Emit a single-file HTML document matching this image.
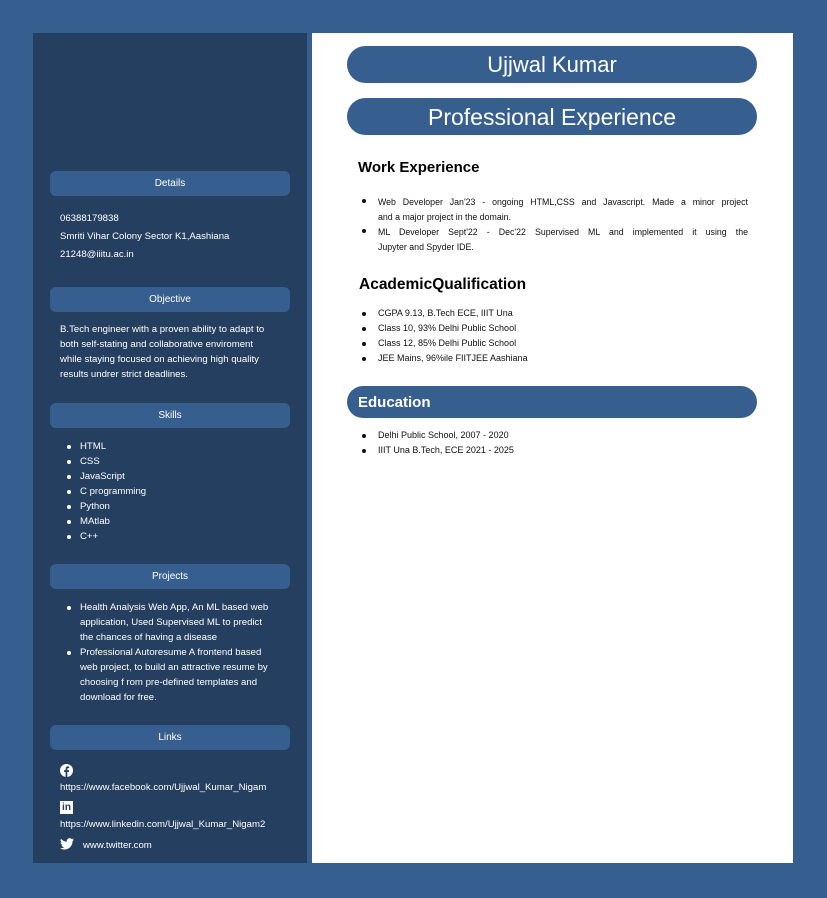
<!DOCTYPE html>
<html><head><meta charset="utf-8"><style>
*{margin:0;padding:0;box-sizing:border-box}
body{width:827px;height:898px;background:#365f8f;position:relative;font-family:"Liberation Sans",sans-serif;overflow:hidden}
.side{position:absolute;left:33px;top:33px;width:274px;height:830px;background:#253f60}
.main{position:absolute;left:312px;top:33px;width:481px;height:830px;background:#fff}
.hd{position:absolute;left:50px;width:240px;height:25px;background:#365f8f;border-radius:6px;color:#fff;font-size:10px;text-align:center;line-height:25px}
.t{position:absolute;color:#fff;font-size:9.6px;white-space:nowrap}
.b{position:absolute;font-size:9px;white-space:nowrap;color:#111}
.dot::before{content:"";position:absolute;left:-16px;top:4px;width:4px;height:4px;border-radius:50%;background:currentColor}
.t.dot::before{left:-13px}
.pill{position:absolute;left:347px;width:410px;background:#365f8f;border-radius:19px;color:#fff;text-align:center}
h3{position:absolute;font-size:15px;color:#000}
.j{display:block;text-align:justify;text-align-last:justify}
</style></head><body>
<div class="side"></div><div class="main"></div>

<div class="hd" style="top:171px">Details</div>
<div class="t" style="left:60px;top:213px">06388179838</div>
<div class="t" style="left:60px;top:231px">Smriti Vihar Colony Sector K1,Aashiana</div>
<div class="t" style="left:60px;top:249px">21248@iiitu.ac.in</div>

<div class="hd" style="top:287px">Objective</div>
<div class="t" style="left:60px;top:324px">B.Tech engineer with a proven ability to adapt to</div>
<div class="t" style="left:60px;top:339px">both self-stating and collaborative enviroment</div>
<div class="t" style="left:60px;top:354px">while staying focused on achieving high quality</div>
<div class="t" style="left:60px;top:369px">results undrer strict deadlines.</div>

<div class="hd" style="top:403px">Skills</div>
<div class="t dot" style="left:80px;top:441px">HTML</div>
<div class="t dot" style="left:80px;top:456px">CSS</div>
<div class="t dot" style="left:80px;top:471px">JavaScript</div>
<div class="t dot" style="left:80px;top:486px">C programming</div>
<div class="t dot" style="left:80px;top:501px">Python</div>
<div class="t dot" style="left:80px;top:516px">MAtlab</div>
<div class="t dot" style="left:80px;top:531px">C++</div>

<div class="hd" style="top:564px">Projects</div>
<div class="t dot" style="left:80px;top:602px">Health Analysis Web App, An ML based web</div>
<div class="t" style="left:80px;top:617px">application, Used Supervised ML to predict</div>
<div class="t" style="left:80px;top:632px">the chances of having a disease</div>
<div class="t dot" style="left:80px;top:647px">Professional Autoresume A frontend based</div>
<div class="t" style="left:80px;top:662px">web project, to build an attractive resume by</div>
<div class="t" style="left:80px;top:677px">choosing f rom pre-defined templates and</div>
<div class="t" style="left:80px;top:692px">download for free.</div>

<div class="hd" style="top:725px">Links</div>
<svg style="position:absolute;left:60px;top:764px" width="13" height="13" viewBox="0 0 13 13"><circle cx="6.5" cy="6.5" r="6.5" fill="#fff"/><path d="M7.3 13V8h1.6l.3-1.9H7.3V5c0-.5.2-.9.9-.9h1V2.5C8.9 2.4 8.4 2.4 7.9 2.4c-1.4 0-2.3.8-2.3 2.4v1.3H4.1V8h1.5v5z" fill="#253f60"/></svg>
<div class="t" style="left:60px;top:782px">https://www.facebook.com/Ujjwal_Kumar_Nigam</div>
<div style="position:absolute;left:60px;top:801px;width:13px;height:13px;background:#fff;color:#253f60;font-size:10px;font-weight:bold;line-height:13px;text-align:center">in</div>
<div class="t" style="left:60px;top:819px">https://www.linkedin.com/Ujjwal_Kumar_Nigam2</div>
<svg style="position:absolute;left:60px;top:838px" width="14" height="12" viewBox="0 0 24 20"><path d="M24 2.4a10 10 0 0 1-2.8.8A5 5 0 0 0 23.3.4a10 10 0 0 1-3.1 1.2A4.9 4.9 0 0 0 11.8 6 14 14 0 0 1 1.7.9a4.9 4.9 0 0 0 1.5 6.6A4.9 4.9 0 0 1 1 6.9a4.9 4.9 0 0 0 3.9 4.9 5 5 0 0 1-2.2.1 4.9 4.9 0 0 0 4.6 3.4A9.9 9.9 0 0 1 0 17.3 14 14 0 0 0 7.5 19.5c9.1 0 14-7.5 14-14v-.6A10 10 0 0 0 24 2.4z" fill="#fff"/></svg>
<div class="t" style="left:83px;top:840px">www.twitter.com</div>

<div class="pill" style="top:46px;height:37px;font-size:22px;line-height:38px">Ujjwal Kumar</div>
<div class="pill" style="top:98px;height:37px;font-size:23px;line-height:39px">Professional Experience</div>

<h3 style="left:358px;top:159px">Work Experience</h3>
<div class="b dot" style="left:378px;top:195px;width:370px;white-space:normal;line-height:15px;font-size:8.8px"><span class="j">Web Developer Jan'23 - ongoing HTML,CSS and Javascript. Made a minor project</span>and a major project in the domain.</div>
<div class="b dot" style="left:378px;top:225px;width:370px;white-space:normal;line-height:15px;font-size:8.8px"><span class="j">ML Developer Sept'22 - Dec'22 Supervised ML and implemented it using the</span>Jupyter and Spyder IDE.</div>

<h3 style="left:359px;top:276px;font-size:15.5px">AcademicQualification</h3>
<div class="b dot" style="left:378px;top:308px">CGPA 9.13, B.Tech ECE, IIIT Una</div>
<div class="b dot" style="left:378px;top:323px">Class 10, 93% Delhi Public School</div>
<div class="b dot" style="left:378px;top:338px">Class 12, 85% Delhi Public School</div>
<div class="b dot" style="left:378px;top:353px">JEE Mains, 96%ile FIITJEE Aashiana</div>

<div class="pill" style="top:386px;height:32px;text-align:left;padding-left:11px;font-size:15px;font-weight:bold;line-height:33px;border-radius:16px">Education</div>
<div class="b dot" style="left:378px;top:430px">Delhi Public School, 2007 - 2020</div>
<div class="b dot" style="left:378px;top:445px">IIIT Una B.Tech, ECE 2021 - 2025</div>
</body></html>
